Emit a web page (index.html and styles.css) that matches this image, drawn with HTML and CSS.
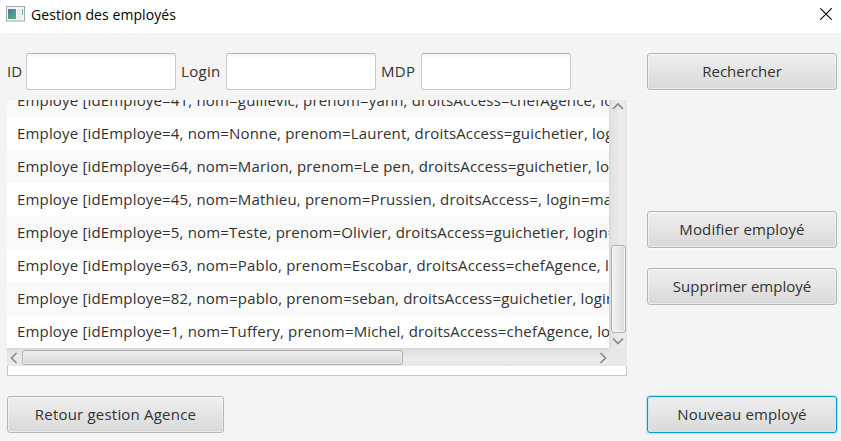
FILE: index.html
```
<!DOCTYPE html>
<html lang="fr">
<head>
<meta charset="utf-8">
<title>Gestion des employés</title>
<link rel="stylesheet" href="styles.css">
</head>
<body>
<header class="titlebar">
  <svg class="app-icon" width="19" height="16" viewBox="0 0 19 16">
    <defs><linearGradient id="g" x1="0" y1="0" x2="1" y2="1"><stop offset="0" stop-color="#4879a5"/><stop offset="1" stop-color="#57b07c"/></linearGradient></defs>
    <rect x=".5" y=".5" width="18" height="14.500" fill="#f4f5f7" stroke="#a3a8ae"/>
    <rect x="2" y="3" width="8" height="10" fill="url(#g)"/>
    <rect x="11" y="3" width="4" height="10" fill="#e8ebed"/>
    <path d="M16.500 3v6" stroke="#67b48c"/>
  </svg>
  <span class="title">Gestion des employés</span>
  <svg class="close" width="12" height="12" viewBox="0 0 12 12"><path d="M.3.3l11.400 11.400M11.700.3L.3 11.700" stroke="#000" stroke-width="1.100"/></svg>
</header>
<main class="content">
  <section class="left">
    <div class="search">
      <label class="l-id" for="i">ID</label><input id="i">
      <label class="l-login" for="l">Login</label><input id="l">
      <label class="l-mdp" for="m">MDP</label><input id="m">
    </div>
    <div class="list">
      <div class="view">
        <div class="rows">
          <div class="row"><span>Employe [idEmploye=41, nom=guillevic, prenom=yann, droitsAccess=chefAgence, login=yann]</span></div>
          <div class="row"><span>Employe [idEmploye=4, nom=Nonne, prenom=Laurent, droitsAccess=guichetier, login=nonne]</span></div>
          <div class="row"><span>Employe [idEmploye=64, nom=Marion, prenom=Le pen, droitsAccess=guichetier, login=marion]</span></div>
          <div class="row"><span>Employe [idEmploye=45, nom=Mathieu, prenom=Prussien, droitsAccess=, login=mathieu]</span></div>
          <div class="row"><span>Employe [idEmploye=5, nom=Teste, prenom=Olivier, droitsAccess=guichetier, login=teste]</span></div>
          <div class="row"><span>Employe [idEmploye=63, nom=Pablo, prenom=Escobar, droitsAccess=chefAgence, login=pablo]</span></div>
          <div class="row"><span>Employe [idEmploye=82, nom=pablo, prenom=seban, droitsAccess=guichetier, login=seban]</span></div>
          <div class="row"><span>Employe [idEmploye=1, nom=Tuffery, prenom=Michel, droitsAccess=chefAgence, login=michel]</span></div>
        </div>
        <div class="vbar">
          <svg width="12" height="8" viewBox="0 0 12 8"><path d="M1 7L6 2l5 5"/></svg>
          <div class="vthumb"></div>
          <svg width="12" height="8" viewBox="0 0 12 8"><path d="M1 1.500l5 5 5-5"/></svg>
        </div>
      </div>
      <div class="hbar">
        <div class="htrack">
          <svg width="8" height="12" viewBox="0 0 8 12"><path d="M6.500 1L1.500 6l5 5"/></svg>
          <div class="hthumb"></div>
          <svg width="8" height="12" viewBox="0 0 8 12"><path d="M1.500 1l5 5-5 5"/></svg>
        </div>
      </div>
      <div class="rest"></div>
    </div>
    <button class="back">Retour gestion Agence</button>
  </section>
  <aside class="actions">
    <button class="find">Rechercher</button>
    <button class="edit">Modifier employé</button>
    <button class="remove">Supprimer employé</button>
    <button class="new">Nouveau employé</button>
  </aside>
</main>
</body>
</html>
```
FILE: styles.css
```
* { box-sizing: border-box; }
body { margin: 0; width: 841px; height: 441px; overflow: hidden; background: #f4f4f4; color: #323232; font: 15px "Open Sans", "Noto Sans", sans-serif; }
svg { display: block; flex: none; }
.titlebar { height: 33px; background: #fff; display: flex; align-items: center; padding: 0 9px 5px 6px; color: #000; }
.title { margin-left: 6px; font-size: 14px; flex: 1; letter-spacing: .07px; }
.content { display: flex; justify-content: space-between; padding: 20px 4px 0 7px; }
.left { width: 620px; }
.search { display: flex; height: 37px; align-items: center; }
.search label { flex: none; white-space: nowrap; padding-bottom: 2px; }
.l-id { width: 19px; }
.l-login { width: 50px; padding-left: 5px; letter-spacing: .3px; }
.l-mdp { width: 45px; padding-left: 5px; letter-spacing: .3px; }
input { width: 150px; height: 37px; flex: none; border: 1px solid #c8c8c8; border-top-color: #b5b5b5; border-radius: 3px; background: linear-gradient(#f2f2f2, #fff 4px); outline: none; padding: 0 8px; }
.list { margin-top: 10px; }
.view { display: flex; height: 248px; overflow: hidden; }
.rows { width: 602px; overflow: hidden; display: flex; flex-direction: column; justify-content: flex-end; }
.row { height: 33px; line-height: 33px; flex: none; background: #fff; padding-left: 10px; white-space: nowrap; letter-spacing: .17px; }
.row:nth-child(odd) { background: #f9f9f9; }
.vbar { width: 18px; background: linear-gradient(90deg, #d5d5d5 0, #e2e2e2 2px, #ececec 12px, #e6e6e6); display: flex; flex-direction: column; align-items: center; padding: 2px 0; }
.vbar path, .htrack path { fill: none; stroke: #858585; stroke-width: 1.600; }
.vthumb { width: 15px; height: 88px; margin: 135px 0 4px; border: 1px solid #aeaeae; border-radius: 3px; background: linear-gradient(90deg, #f4f4f4, #dadada); box-shadow: inset 0 0 0 1px #f4f4f4; }
.hbar { height: 18px; background: #e8e8e8; }
.htrack { width: 602px; height: 18px; display: flex; align-items: center; padding: 1px 2px 0 3px; background: linear-gradient(#d2d2d2 0, #e1e1e1 2px, #ebebeb 12px, #e6e6e6); }
.hthumb { width: 381px; height: 15px; margin: 0 auto 0 4px; border: 1px solid #aeaeae; border-radius: 3px; background: linear-gradient(#f0f0f0, #d5d5d5); box-shadow: inset 0 0 0 1px #ececec; }
.rest { height: 10px; background: #fff; border: 1px solid #c8c8c8; border-top: 0; }
button { display: block; width: 190px; height: 37px; padding: 0 0 2px; border: 1px solid #b5b5b5; border-radius: 3px; background: linear-gradient(#efefef, #d9d9d9); box-shadow: inset 0 0 0 1px rgba(255,255,255,.45), 0 1px 0 #f9f9f9; color: #323232; font: inherit; }
.back { width: 217px; margin-top: 20px; letter-spacing: .2px; }
.edit { margin-top: 121px; letter-spacing: .15px; }
.remove { margin-top: 20px; }
.new { margin-top: 91px; letter-spacing: .15px; border-color: #039ed3; box-shadow: 0 0 0 1px #b8e2f1, inset 0 0 0 1px #d4e5ee; }
```
